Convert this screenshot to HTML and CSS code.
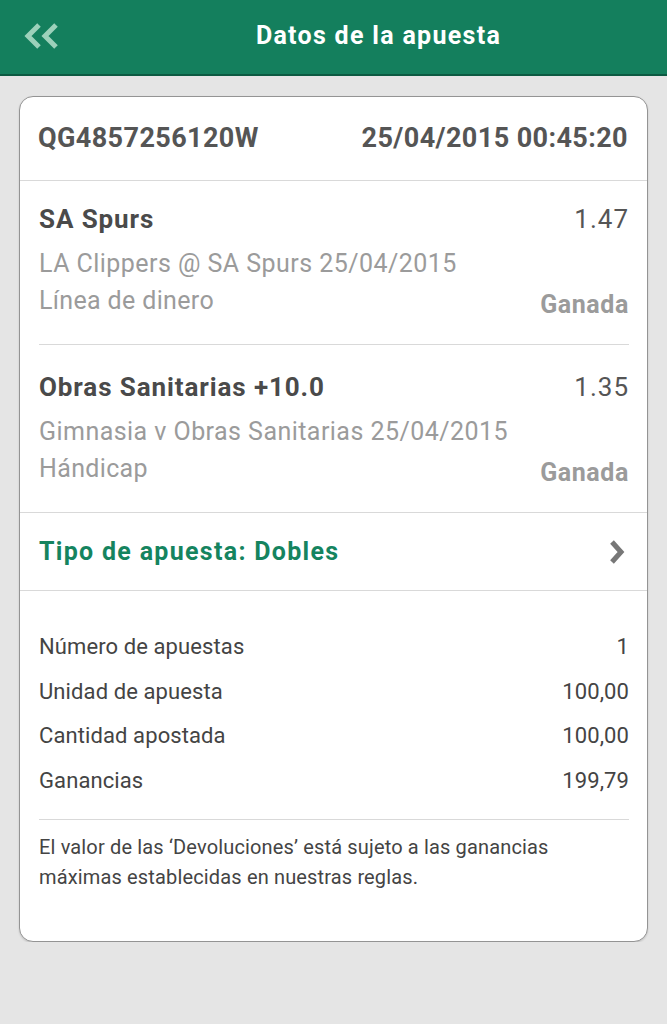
FILE: index.html
```html
<!DOCTYPE html>
<html lang="es">
<head>
  <meta charset="UTF-8">
  <meta name="viewport" content="width=device-width, initial-scale=1.0">
  <title>Datos de la apuesta</title>
  <link rel="stylesheet" href="styles.css">
</head>
<body>
  <div class="topbar">
    <div class="back">
      <svg width="38" height="28" viewBox="0 0 38 28">
        <polyline points="15,3 4,14 15,25" fill="none" stroke="#9cd1ba" stroke-width="5"/>
        <polyline points="32,3 21,14 32,25" fill="none" stroke="#9cd1ba" stroke-width="5"/>
      </svg>
    </div>
    <div class="title">Datos de la apuesta</div>
  </div>

  <div class="card">
    <div class="card-head">
      <span>QG4857256120W</span>
      <span>25/04/2015 00:45:20</span>
    </div>

    <div class="legs">
      <div class="leg">
        <div class="leg-top">
          <span class="pick">SA Spurs</span>
          <span class="odds">1.47</span>
        </div>
        <div class="event">LA Clippers @ SA Spurs 25/04/2015</div>
        <div class="leg-bottom">
          <span class="market">Línea de dinero</span>
          <span class="result">Ganada</span>
        </div>
      </div>
      <div class="leg">
        <div class="leg-top">
          <span class="pick">Obras Sanitarias +10.0</span>
          <span class="odds">1.35</span>
        </div>
        <div class="event">Gimnasia v Obras Sanitarias 25/04/2015</div>
        <div class="leg-bottom">
          <span class="market">Hándicap</span>
          <span class="result">Ganada</span>
        </div>
      </div>
    </div>

    <div class="bet-type">
      <span>Tipo de apuesta: Dobles</span>
      <svg width="20" height="26" viewBox="0 0 20 26">
        <polyline points="5,3 14,13 5,23" fill="none" stroke="#777" stroke-width="5"/>
      </svg>
    </div>

    <div class="summary">
      <div class="rows">
        <div class="row"><span>Número de apuestas</span><span>1</span></div>
        <div class="row"><span>Unidad de apuesta</span><span>100,00</span></div>
        <div class="row"><span>Cantidad apostada</span><span>100,00</span></div>
        <div class="row"><span>Ganancias</span><span>199,79</span></div>
      </div>
      <p class="note">El valor de las ‘Devoluciones’ está sujeto a las ganancias máximas establecidas en nuestras reglas.</p>
    </div>
  </div>
</body>
</html>
```

FILE: styles.css
```css
html, body {
  margin: 0;
  background: #e5e5e5;
  font-family: Roboto, "Liberation Sans", sans-serif;
}
.topbar {
  height: 74px;
  background: #147f5d;
  border-bottom: 2px solid #0c5a42;
  display: flex;
  align-items: center;
}
.back {
  width: 90px;
  padding: 0 0 2px 24px;
  box-sizing: border-box;
  display: flex;
}
.title {
  flex: 1;
  text-align: center;
  color: #fff;
  font-size: 25px;
  letter-spacing: 1.3px;
  font-weight: bold;
  margin-top: -4px;
}
.card {
  margin: 20px 19px 0;
  background: #fff;
  border: 1px solid #949494;
  border-radius: 14px;
  box-shadow: 0 1px 2px rgba(0, 0, 0, 0.15);
}
.card-head {
  display: flex;
  justify-content: space-between;
  padding: 26px 19px 26px 18px;
  line-height: 31px;
  font-size: 27px;
  letter-spacing: 0.4px;
  font-weight: bold;
  color: #555;
  border-bottom: 1px solid #d9d9d9;
}
.legs {
  padding: 0 18px 0 19px;
  border-bottom: 1px solid #d9d9d9;
}
.leg {
  padding: 18px 0 20px;
  border-bottom: 1px solid #d9d9d9;
}
.leg + .leg {
  padding-top: 22px;
  border-bottom: none;
}
.leg-top, .leg-bottom {
  display: flex;
  justify-content: space-between;
  align-items: flex-start;
}
.leg-top {
  line-height: 40px;
}
.pick {
  font-size: 26px;
  letter-spacing: 0.9px;
  font-weight: bold;
  color: #4a4a4a;
}
.odds {
  font-size: 26px;
  letter-spacing: 1px;
  color: #555;
}
.event {
  margin-top: 7px;
  line-height: 36px;
  font-size: 25px;
  letter-spacing: 0.45px;
  color: #9b9b9b;
}
.market {
  line-height: 38px;
  font-size: 25px;
  letter-spacing: 0.35px;
  color: #9b9b9b;
}
.result {
  padding-top: 4px;
  line-height: 38px;
  font-size: 25px;
  letter-spacing: 0.6px;
  font-weight: bold;
  color: #9b9b9b;
}
.bet-type {
  height: 77px;
  padding: 0 20px 0 19px;
  display: flex;
  justify-content: space-between;
  align-items: center;
  border-bottom: 1px solid #d9d9d9;
  color: #15845f;
  font-size: 25px;
  letter-spacing: 1.3px;
  font-weight: bold;
}
.summary {
  padding: 34px 18px 49px 19px;
}
.rows {
  padding-bottom: 16px;
  border-bottom: 1px solid #d9d9d9;
}
.row {
  display: flex;
  justify-content: space-between;
  line-height: 44.5px;
  font-size: 22px;
  letter-spacing: 0.1px;
  color: #444;
}
.note {
  margin: 12px 0 0;
  line-height: 30px;
  font-size: 20px;
  letter-spacing: 0.15px;
  color: #444;
  padding-right: 60px;
}
```
